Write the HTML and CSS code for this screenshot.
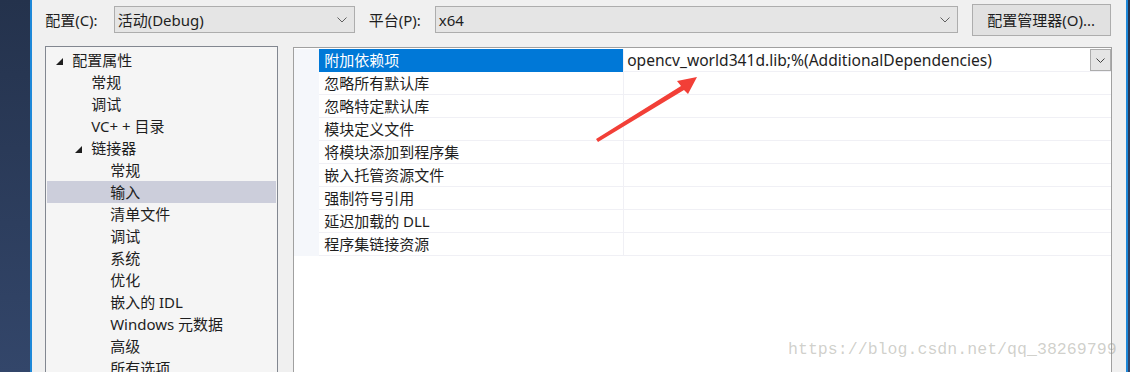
FILE: index.html
```html
<!DOCTYPE html>
<html>
<head>
<meta charset="UTF-8">
<title>链接器 - 输入</title>
<link rel="stylesheet" href="styles.css">
</head>
<body>
<div class="frame">
<div class="edge edge-left"></div>

<div class="dialog">
  <div class="toolbar">
    <span class="label">配置(C):</span>
    <div class="combo combo-config"><span>活动(Debug)</span><svg class="chev" width="10" height="6" viewBox="0 0 10 6"><path d="M0.5 0.5 L5 5 L9.5 0.5" fill="none" stroke="#606060" stroke-width="1"/></svg></div>
    <span class="label">平台(P):</span>
    <div class="combo combo-platform"><span>x64</span><svg class="chev" width="10" height="6" viewBox="0 0 10 6"><path d="M0.5 0.5 L5 5 L9.5 0.5" fill="none" stroke="#606060" stroke-width="1"/></svg></div>
    <button class="btn">配置管理器(O)...</button>
  </div>

  <div class="panes">
    <ul class="tree">
      <li class="lvl1"><svg class="tri" width="7" height="7" viewBox="0 0 7 7"><polygon points="7,0 7,7 0,7" fill="#1e1e1e"/></svg>配置属性</li>
      <li class="lvl2">常规</li>
      <li class="lvl2">调试</li>
      <li class="lvl2">VC+ + 目录</li>
      <li class="lvl2 open"><svg class="tri" width="7" height="7" viewBox="0 0 7 7"><polygon points="7,0 7,7 0,7" fill="#1e1e1e"/></svg>链接器</li>
      <li class="lvl3">常规</li>
      <li class="lvl3 sel">输入</li>
      <li class="lvl3">清单文件</li>
      <li class="lvl3">调试</li>
      <li class="lvl3">系统</li>
      <li class="lvl3">优化</li>
      <li class="lvl3">嵌入的 IDL</li>
      <li class="lvl3">Windows 元数据</li>
      <li class="lvl3">高级</li>
      <li class="lvl3">所有选项</li>
    </ul>

    <div class="grid">
      <div class="rows">
        <div class="row sel"><div class="name">附加依赖项</div><div class="value"><span class="text">opencv_world341d.lib;%(AdditionalDependencies)</span><span class="drop"><svg width="9" height="5" viewBox="0 0 9 5"><path d="M0.5 0.5 L4.5 4.5 L8.5 0.5" fill="none" stroke="#404040" stroke-width="1"/></svg></span></div></div>
        <div class="row"><div class="name">忽略所有默认库</div><div class="value"></div></div>
        <div class="row"><div class="name">忽略特定默认库</div><div class="value"></div></div>
        <div class="row"><div class="name">模块定义文件</div><div class="value"></div></div>
        <div class="row"><div class="name">将模块添加到程序集</div><div class="value"></div></div>
        <div class="row"><div class="name">嵌入托管资源文件</div><div class="value"></div></div>
        <div class="row"><div class="name">强制符号引用</div><div class="value"></div></div>
        <div class="row"><div class="name">延迟加载的 DLL</div><div class="value"></div></div>
        <div class="row"><div class="name">程序集链接资源</div><div class="value"></div></div>
      </div>
    </div>
  </div>
</div>

<div class="edge edge-right"></div>
</div>

<svg class="arrow" width="1130" height="372" viewBox="0 0 1130 372">
  <polygon points="697,77 688,94 684,90 598,142 596,139 681,86 677,81" fill="#f23f37"/>
</svg>

<div class="watermark">https://blog.csdn.net/qq_38269799</div>
</body>
</html>
```

FILE: styles.css
```css
html, body { margin: 0; padding: 0; }
body {
    width: 1130px;
    height: 372px;
    overflow: hidden;
    position: relative;
    background: #f0f0f0;
    color: #1e1e1e;
    font-family: "Noto Sans", "Noto Sans CJK SC", sans-serif;
    font-size: 15px;
}
ul { list-style: none; margin: 0; padding: 0; }

.frame { display: flex; height: 372px; }

.edge { background: linear-gradient(#24324c, #33466a); }
.edge-left { width: 32px; border-right: 2px solid #1e88d8; }
.edge-right { width: 2px; margin-left: 14px; border-left: 2px solid #1e88d8; }

.dialog { flex: 1; display: flex; flex-direction: column; padding-left: 13px; min-height: 0; }

/* top row: configuration / platform */
.toolbar { display: flex; align-items: center; height: 40px; flex-shrink: 0; }
.label { white-space: nowrap; line-height: 20px; }
.combo {
    box-sizing: border-box;
    height: 27px;
    margin-top: -1px;
    border: 1px solid #adadad;
    background: #e5e5e5;
    display: flex;
    align-items: center;
    padding: 0 0 0 3px;
    justify-content: space-between;
}
.combo span { line-height: 20px; }
.combo .chev { margin-right: 7px; }
.combo-config { width: 241px; margin-left: 16px; margin-right: 14px; }
.combo-platform { width: 523px; margin-left: 14px; margin-right: 14px; }
.btn {
    box-sizing: border-box;
    width: 139px;
    height: 32px;
    margin-top: -1px;
    border: 1px solid #adadad;
    background: #e1e1e1;
    font: inherit;
    color: #1e1e1e;
    padding: 0;
}

.panes { display: flex; gap: 15px; margin-top: 6px; flex: 1; min-height: 0; }

/* navigation tree */
.tree {
    box-sizing: border-box;
    width: 233px;
    border: 1px solid #828790;
    border-bottom: 0;
    background: #f5f5f5;
    padding: 2px 1px 0;
}
.tree li { height: 22px; line-height: 22px; white-space: nowrap; display: flex; align-items: center; flex-shrink: 0; }
.tree .tri { margin-right: 9px; margin-top: 3px; }
.tree .lvl1 { padding-left: 9px; }
.tree .lvl2 { padding-left: 44px; }
.tree .lvl2.open { padding-left: 28px; }
.tree .lvl3 { padding-left: 63px; }
.tree .sel { background: #cccedb; }

/* property grid */
.grid {
    box-sizing: border-box;
    width: 819px;
    margin-top: 1px;
    border: 1px solid #a0a0a0;
    border-bottom: 0;
    background: #fff;
    padding-top: 1px;
}
.rows { background: #f5f7fb; padding-left: 25px; }
.row { display: flex; height: 23px; line-height: 22px; }
.row .name {
    box-sizing: border-box;
    width: 304px;
    padding-left: 5px;
    background: #fff;
    border-bottom: 1px solid #f0f0f5;
    white-space: nowrap;
}
.row .value {
    flex: 1;
    display: flex;
    justify-content: space-between;
    padding-left: 3px;
    background: #fff;
    border-left: 1px solid #f0f0f5;
    border-bottom: 1px solid #f0f0f5;
    white-space: nowrap;
}
.row .value .text { font-size: 15.6px; }
.row.sel .name { background: #0078d7; color: #fff; border-bottom-color: #0078d7; }
.drop {
    box-sizing: border-box;
    width: 21px;
    height: 22px;
    border: 1px solid #acacac;
    background: #e5e5e5;
    display: flex;
    align-items: center;
    justify-content: center;
}

.arrow { position: absolute; left: 0; top: 0; pointer-events: none; }

.watermark {
    position: absolute;
    left: 788px;
    top: 340px;
    font-family: "Liberation Mono", monospace;
    font-size: 16.6px;
    color: rgba(150, 150, 140, 0.45);
    white-space: nowrap;
}
```
